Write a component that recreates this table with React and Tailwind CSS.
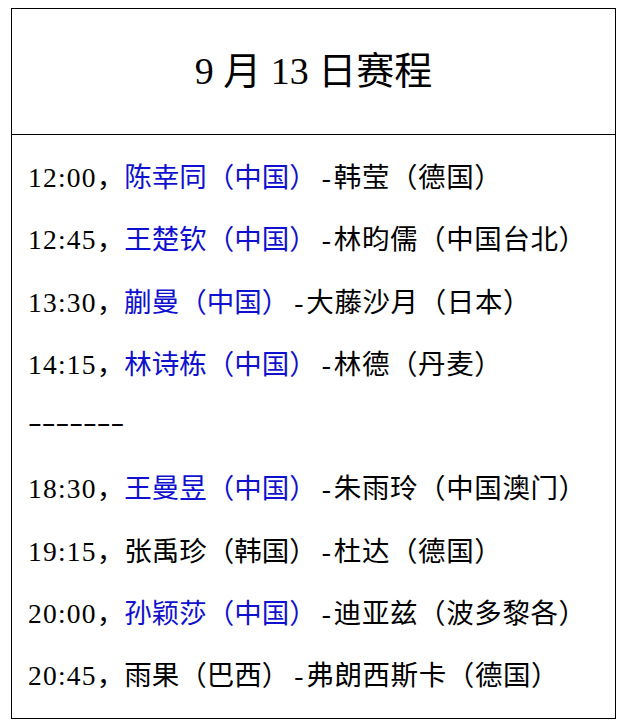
const serif = '"Liberation Serif", "Noto Sans CJK SC", serif';

const rows = [
  { time: '12:00', cn: '陈幸同（中国）', rest: '韩莹（德国）' },
  { time: '12:45', cn: '王楚钦（中国）', rest: '林昀儒（中国台北）' },
  { time: '13:30', cn: '蒯曼（中国）', rest: '大藤沙月（日本）' },
  { time: '14:15', cn: '林诗栋（中国）', rest: '林德（丹麦）' },
  { divider: true },
  { time: '18:30', cn: '王曼昱（中国）', rest: '朱雨玲（中国澳门）' },
  { time: '19:15', first: '张禹珍（韩国）', rest: '杜达（德国）' },
  { time: '20:00', cn: '孙颖莎（中国）', rest: '迪亚兹（波多黎各）' },
  { time: '20:45', first: '雨果（巴西）', rest: '弗朗西斯卡（德国）' },
];

function Row({ r }) {
  if (r.divider) {
    return (
      <div className="h-[62.3px] leading-[62.3px]">
        <span className="inline-block scale-x-150 origin-left -translate-y-[5px]">-------</span>
      </div>
    );
  }
  return (
    <div className="h-[62.3px] leading-[62.3px] whitespace-nowrap">
      <span className="tracking-[1.2px]">{r.time}</span>
      <span>，</span>
      {r.cn ? <span className="text-[#1010d0]">{r.cn}</span> : <span>{r.first}</span>}
      <span className="pl-[5px] pr-[3px]">-</span>
      <span className="tracking-[0.6px]">{r.rest}</span>
    </div>
  );
}

export default function App() {
  return (
    <div className="w-[627px] h-[726px] bg-white pt-[8px] pl-[11px]" style={{ fontFamily: serif }}>
      <div className="w-[605px] border border-black text-black">
        <div className="h-[126px] border-b border-black flex items-center justify-center text-[38px]">
          9 月 13 日赛程
        </div>
        <div className="pt-[12px] pb-[10px] pl-[16px] text-[27.5px]">
          {rows.map((r, i) => (
            <Row key={i} r={r} />
          ))}
        </div>
      </div>
    </div>
  );
}
